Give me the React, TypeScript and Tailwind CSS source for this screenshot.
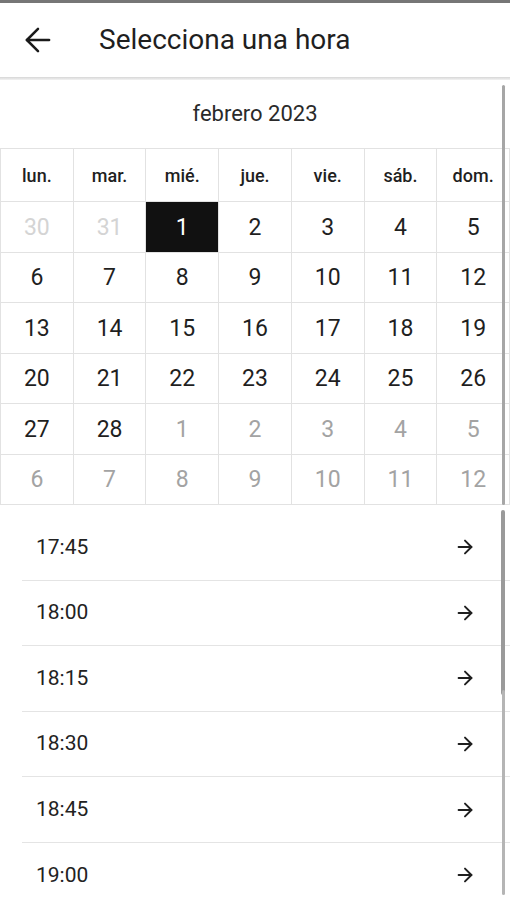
import React from "react";
import { ArrowLeft, ArrowRight } from "lucide-react";

type Day = { n: number; tone: "past" | "cur" | "next" };

const weekDays = ["lun.", "mar.", "mié.", "jue.", "vie.", "sáb.", "dom."];

const buildDays = (): Day[] => {
  const days: Day[] = [
    { n: 30, tone: "past" },
    { n: 31, tone: "past" },
  ];
  for (let i = 1; i <= 28; i++) days.push({ n: i, tone: "cur" });
  for (let i = 1; i <= 12; i++) days.push({ n: i, tone: "next" });
  return days;
};

const times = ["17:45", "18:00", "18:15", "18:30", "18:45", "19:00"];

const App = () => {
  const days = buildDays();

  return (
    <div className="w-[510px] h-[900px] flex flex-col bg-white overflow-hidden font-['Roboto',sans-serif] text-[#212121]">
      <div className="h-[3px] shrink-0 bg-[#767676]" />

      {/* header */}
      <div className="h-[74px] shrink-0 flex items-center">
        <ArrowLeft className="ml-[19px] text-[#1a1a1a]" size={38} strokeWidth={1.6} />
        <h1 className="ml-[42px] text-[28px] leading-none text-[#1f1f1f]">Selecciona una hora</h1>
      </div>
      <div className="h-[3px] shrink-0 bg-gradient-to-b from-[#d6d6d6] to-[#f3f3f3]" />

      {/* calendar */}
      <div className="relative h-[425px] shrink-0">
        <div className="h-[68px] flex items-center justify-center text-[22px] text-[#2a2a2a] pb-[2px]">
          febrero 2023
        </div>
        <div className="grid grid-cols-7 border-t border-l border-[#e2e2e2]">
          {weekDays.map((w) => (
            <div
              key={w}
              className="h-[53px] flex items-center justify-center border-r border-b border-[#e2e2e2] text-[18px] font-medium text-[#1f1f1f]"
            >
              {w}
            </div>
          ))}
          {days.map((d, i) => {
            const selected = d.tone === "cur" && d.n === 1;
            return (
              <div
                key={i}
                className={`h-[50.5px] flex items-center justify-center pt-[2px] border-r border-b border-[#e2e2e2] text-[23px] ${
                  selected
                    ? "bg-[#111111] text-white border-[#2a2a2a]"
                    : d.tone === "past"
                    ? "text-[#d4d4d4]"
                    : d.tone === "next"
                    ? "text-[#a3a3a3]"
                    : "text-[#1f1f1f]"
                }`}
              >
                {d.n}
              </div>
            );
          })}
        </div>
        <div className="absolute right-[5px] top-[5px] bottom-0 w-[3px] bg-[#a6a6a6] rounded-full" />
      </div>

      {/* time list */}
      <div className="relative flex-1 pt-[10px]">
        {times.map((t) => (
          <div
            key={t}
            className="h-[65.6px] ml-[22px] pl-[14px] pr-[34px] flex items-center justify-between border-b border-[#e4e4e4]"
          >
            <span className="text-[21px] text-[#222222]">{t}</span>
            <ArrowRight size={22} strokeWidth={2.1} className="text-[#1f1f1f]" />
          </div>
        ))}
        <div className="absolute right-[5px] top-[5px] h-[185px] w-[4px] bg-[#9a9a9a] rounded-full" />
        <div className="absolute right-[5px] top-[185px] h-[205px] w-[3px] bg-[#b5b5b5] rounded-full" />
      </div>
    </div>
  );
};

export default App;
